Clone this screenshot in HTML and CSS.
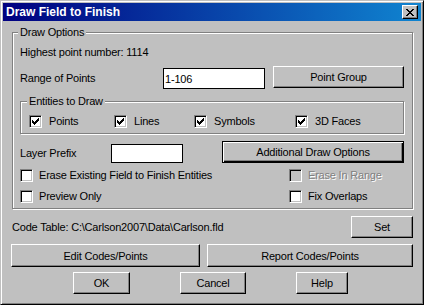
FILE: index.html
```html
<!DOCTYPE html>
<html lang="en">
<head>
    <meta charset="UTF-8">
    <meta name="viewport" content="width=device-width, initial-scale=1.0">
    <title>Draw Field to Finish</title>
    <link rel="stylesheet" href="styles.css">
</head>
<body>
    <div class="window">
        <div class="titlebar">
            <span class="title">Draw Field to Finish</span>
            <button class="close-btn">
                <svg width="8" height="7" viewBox="0 0 8 7" shape-rendering="crispEdges"><path d="M0 0h2v1H0zM6 0h2v1H6zM1 1h2v1H1zM5 1h2v1H5zM2 2h4v1H2zM3 3h2v1H3zM2 4h4v1H2zM1 5h2v1H1zM5 5h2v1H5zM0 6h2v1H0zM6 6h2v1H6z" fill="#000"/></svg>
            </button>
        </div>

        <div class="dialog">
            <div class="group">
                <div class="group-title">Draw Options</div>
                <div class="highest">Highest point number: 1114</div>

                <div class="range-row">
                    <label class="range-label" for="range">Range of Points</label>
                    <input class="text-field range-input" id="range" type="text" value="1-106">
                    <button class="btn point-group">Point Group</button>
                </div>

                <div class="group sub-group">
                    <div class="group-title">Entities to Draw</div>
                    <div class="entities">
                        <label class="check"><span class="box"><svg width="7" height="7" viewBox="0 0 7 7" shape-rendering="crispEdges"><path d="M0 2h1v3H0zM1 3h1v3H1zM2 4h1v3H2zM3 3h1v3H3zM4 2h1v3H4zM5 1h1v3H5zM6 0h1v3H6z"/></svg></span>Points</label>
                        <label class="check"><span class="box"><svg width="7" height="7" viewBox="0 0 7 7" shape-rendering="crispEdges"><path d="M0 2h1v3H0zM1 3h1v3H1zM2 4h1v3H2zM3 3h1v3H3zM4 2h1v3H4zM5 1h1v3H5zM6 0h1v3H6z"/></svg></span>Lines</label>
                        <label class="check"><span class="box"><svg width="7" height="7" viewBox="0 0 7 7" shape-rendering="crispEdges"><path d="M0 2h1v3H0zM1 3h1v3H1zM2 4h1v3H2zM3 3h1v3H3zM4 2h1v3H4zM5 1h1v3H5zM6 0h1v3H6z"/></svg></span>Symbols</label>
                        <label class="check"><span class="box"><svg width="7" height="7" viewBox="0 0 7 7" shape-rendering="crispEdges"><path d="M0 2h1v3H0zM1 3h1v3H1zM2 4h1v3H2zM3 3h1v3H3zM4 2h1v3H4zM5 1h1v3H5zM6 0h1v3H6z"/></svg></span>3D Faces</label>
                    </div>
                </div>

                <div class="layer-row">
                    <label class="layer-label" for="layer">Layer Prefix</label>
                    <input class="text-field layer-input" id="layer" type="text" value="">
                    <button class="btn btn-default additional">Additional Draw Options</button>
                </div>

                <div class="check-row">
                    <label class="check wide"><span class="box"></span>Erase Existing Field to Finish Entities</label>
                    <label class="check disabled"><span class="box"></span>Erase In Range</label>
                </div>
                <div class="check-row last">
                    <label class="check wide"><span class="box"></span>Preview Only</label>
                    <label class="check"><span class="box"></span>Fix Overlaps</label>
                </div>
            </div>

            <div class="code-row">
                <span class="code-label">Code Table: C:\Carlson2007\Data\Carlson.fld</span>
                <button class="btn set-btn">Set</button>
            </div>

            <div class="wide-buttons">
                <button class="btn edit-btn">Edit Codes/Points</button>
                <button class="btn report-btn">Report Codes/Points</button>
            </div>

            <div class="main-buttons">
                <button class="btn ok-btn">OK</button>
                <button class="btn cancel-btn">Cancel</button>
                <button class="btn help-btn">Help</button>
            </div>
        </div>
    </div>
</body>
</html>
```

FILE: styles.css
```css
* {
    box-sizing: border-box;
}
body {
    margin: 0;
    background: #c0c0c0;
    font-family: "Liberation Sans", Arial, sans-serif;
    font-size: 11px;
    letter-spacing: -0.2px;
    color: #000;
}

/* window frame */
.window {
    width: 424px;
    height: 305px;
    padding: 2px;
    background: #c0c0c0;
    border: 1px solid;
    border-color: #c0c0c0 #000 #000 #c0c0c0;
    box-shadow: inset 1px 1px #fff, inset -1px -1px #808080;
}
.titlebar {
    height: 18px;
    padding: 0 3px;
    display: flex;
    align-items: center;
    justify-content: space-between;
    background: linear-gradient(to right, #000080, #1084d0);
}
.title {
    color: #fff;
    font-weight: bold;
    font-size: 12px;
    letter-spacing: 0;
    line-height: 18px;
}
.close-btn {
    width: 16px;
    height: 14px;
    padding: 0;
    display: flex;
    align-items: center;
    justify-content: center;
    background: #c0c0c0;
    border: 1px solid;
    border-color: #fff #000 #000 #fff;
    box-shadow: inset -1px -1px #808080;
}

.dialog {
    padding: 11px 8px 0 9px;
}

/* etched group boxes */
.group {
    border: 1px solid #808080;
    box-shadow: inset 1px 1px #fff, 1px 1px #fff;
    padding: 0 8px 5px 7px;
}
.group-title {
    display: table;
    margin: -7px 0 0 -2px;
    padding: 0 2px;
    background: #c0c0c0;
    line-height: 13px;
}
.highest {
    margin-top: 7px;
    height: 13px;
    line-height: 13px;
}

.range-row {
    margin-top: 7px;
    height: 23px;
    display: flex;
    align-items: flex-start;
}
.range-label {
    width: 143px;
    margin-top: 2px;
    line-height: 21px;
}
.text-field {
    font: inherit;
    letter-spacing: inherit;
    padding: 0 1px;
    border: 1px solid #000;
    background: #fff;
    outline: none;
}
.range-input {
    width: 102px;
    height: 21px;
    margin-top: 2px;
}
.point-group {
    width: 131px;
    height: 22px;
    margin-left: 8px;
}

.sub-group {
    margin-top: 12px;
    padding: 0 8px 5px 8px;
}
.entities {
    margin-top: 7px;
    height: 13px;
    display: grid;
    grid-template-columns: 85px 80px 101px auto;
}

.check {
    display: flex;
    align-items: center;
    height: 13px;
    line-height: 13px;
    white-space: nowrap;
}
.box {
    width: 13px;
    height: 13px;
    flex-shrink: 0;
    margin-right: 6px;
    background: #fff;
    border: 1px solid;
    border-color: #808080 #fff #fff #808080;
    box-shadow: inset 1px 1px #000, inset -1px -1px #c0c0c0;
}
.box svg {
    display: block;
    margin: 2px 0 0 2px;
}
.entities .box {
    margin-right: 7px;
}
.check.disabled {
    color: #808080;
    text-shadow: 1px 1px #fff;
}
.check.disabled .box {
    background: #c0c0c0;
}

.layer-row {
    margin-top: 7px;
    height: 22px;
    display: flex;
    align-items: flex-start;
}
.layer-label {
    width: 91px;
    margin-top: 3px;
    line-height: 19px;
}
.layer-input {
    width: 72px;
    height: 19px;
    margin-top: 3px;
}
.additional {
    margin-left: auto;
    width: 182px;
    height: 22px;
}

.check-row {
    margin-top: 6px;
    display: flex;
}
.check-row.last {
    margin-top: 8px;
}
.check.wide {
    width: 269px;
}

/* buttons */
.btn {
    font: inherit;
    letter-spacing: inherit;
    color: #000;
    padding: 0;
    background: #c0c0c0;
    border: 1px solid;
    border-color: #fff #000 #000 #fff;
    box-shadow: inset -1px -1px #808080;
}
.btn-default {
    border-color: #000;
    box-shadow: inset 1px 1px #fff, inset -1px -1px #000, inset -2px -2px #808080;
}

.code-row {
    margin-top: 7px;
    height: 22px;
    display: flex;
}
.code-label {
    line-height: 22px;
}
.set-btn {
    margin-left: auto;
    width: 62px;
    height: 22px;
}

.wide-buttons {
    margin-top: 6px;
    display: flex;
}
.edit-btn {
    margin-left: -1px;
    width: 189px;
    height: 23px;
}
.report-btn {
    margin-left: auto;
    width: 206px;
    height: 23px;
}

.main-buttons {
    margin-top: 5px;
    display: flex;
}
.main-buttons .btn {
    height: 22px;
}
.ok-btn {
    margin-left: 61px;
    width: 57px;
}
.cancel-btn {
    margin-left: 50px;
    width: 66px;
}
.help-btn {
    margin-left: 50px;
    width: 52px;
}
```
